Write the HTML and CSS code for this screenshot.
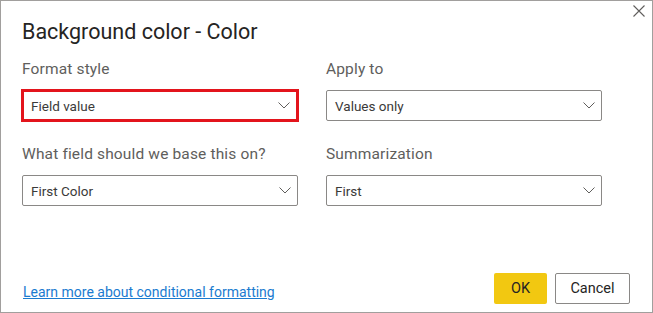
FILE: index.html
```html
<!DOCTYPE html>
<html lang="en">
<head>
    <meta charset="UTF-8">
    <meta name="viewport" content="width=device-width, initial-scale=1.0">
    <title>Background color - Color</title>
    <link rel="stylesheet" href="styles.css">
</head>
<body>

<div class="dialog">
    <!-- Close button in the corner -->
    <button class="close-btn" aria-label="Close">
        <svg width="12" height="12" viewBox="0 0 12 12">
            <path d="M0.5 0.5 L11.5 11.5 M11.5 0.5 L0.5 11.5" stroke="#605e5c" stroke-width="1.1" fill="none"/>
        </svg>
    </button>

    <h1 class="dialog-title">Background color - Color</h1>

    <div class="form-grid">
        <div class="field">
            <label class="field-label">Format style</label>
            <div class="select select-highlight">
                <span>Field value</span>
                <svg class="chevron" width="12" height="7" viewBox="0 0 12 7"><path d="M0.5 0.5 L6 6 L11.5 0.5" stroke="#605e5c" stroke-width="1" fill="none"/></svg>
            </div>
        </div>
        <div class="field">
            <label class="field-label">Apply to</label>
            <div class="select">
                <span>Values only</span>
                <svg class="chevron" width="12" height="7" viewBox="0 0 12 7"><path d="M0.5 0.5 L6 6 L11.5 0.5" stroke="#605e5c" stroke-width="1" fill="none"/></svg>
            </div>
        </div>
        <div class="field">
            <label class="field-label">What field should we base this on?</label>
            <div class="select">
                <span>First Color</span>
                <svg class="chevron" width="12" height="7" viewBox="0 0 12 7"><path d="M0.5 0.5 L6 6 L11.5 0.5" stroke="#605e5c" stroke-width="1" fill="none"/></svg>
            </div>
        </div>
        <div class="field">
            <label class="field-label">Summarization</label>
            <div class="select">
                <span>First</span>
                <svg class="chevron" width="12" height="7" viewBox="0 0 12 7"><path d="M0.5 0.5 L6 6 L11.5 0.5" stroke="#605e5c" stroke-width="1" fill="none"/></svg>
            </div>
        </div>
    </div>

    <div class="dialog-footer">
        <a href="#" class="learn-link">Learn more about conditional formatting</a>
        <div class="actions">
            <button class="btn btn-ok">OK</button>
            <button class="btn btn-cancel">Cancel</button>
        </div>
    </div>
</div>

</body>
</html>
```

FILE: styles.css
```css
/* General styles */
body {
    font-family: Roboto, "Liberation Sans", sans-serif;
    background-color: #fff;
    margin: 0;
    padding: 0;
}

.dialog {
    position: relative;
    width: 653px;
    height: 313px;
    box-sizing: border-box;
    border: 1px solid #a19f9d;
    padding: 0 22px 8px 21px;
    display: flex;
    flex-direction: column;
}

.close-btn {
    position: absolute;
    top: 4px;
    right: 7px;
    padding: 0;
    border: none;
    background: none;
    width: 12px;
    height: 12px;
    cursor: pointer;
}

.close-btn svg {
    display: block;
}

.dialog-title {
    font-size: 21.5px;
    font-weight: normal;
    color: #252423;
    margin: 17px 0 0 0;
    line-height: 28px;
}

/* Form grid */
.form-grid {
    display: grid;
    grid-template-columns: 276px 276px;
    column-gap: 28px;
    row-gap: 23px;
    margin-top: 13px;
}

.field-label {
    display: block;
    font-size: 15.5px;
    letter-spacing: 0.15px;
    line-height: 20px;
    color: #605e5c;
    margin-bottom: 11px;
}

.select {
    height: 31px;
    box-sizing: border-box;
    border: 1px solid #8a8886;
    border-radius: 2px;
    padding: 0 6px 0 8px;
    display: flex;
    align-items: center;
    justify-content: space-between;
    font-size: 13.5px;
    color: #3b3a39;
}

.select-highlight {
    height: 33px;
    margin: -1px;
    border: 3px solid #e3141c;
    border-radius: 0;
    padding: 0 6px 0 7px;
}

.chevron {
    display: block;
    margin-top: -1px;
}

/* Footer */
.dialog-footer {
    margin-top: auto;
    display: flex;
    justify-content: space-between;
    align-items: center;
}

.learn-link {
    font-size: 14px;
    color: #1a7bd0;
    text-decoration: underline;
    margin-left: 1px;
    margin-top: 6px;
}

.actions {
    display: flex;
    gap: 8px;
}

.btn {
    height: 31px;
    box-sizing: border-box;
    border-radius: 2px;
    font-family: Roboto, "Liberation Sans", sans-serif;
    font-size: 14.5px;
    color: #252423;
    cursor: pointer;
}

.btn-ok {
    width: 53px;
    background-color: #f2c811;
    border: none;
}

.btn-cancel {
    width: 75px;
    background-color: #fff;
    border: 1px solid #8a8886;
}
```
